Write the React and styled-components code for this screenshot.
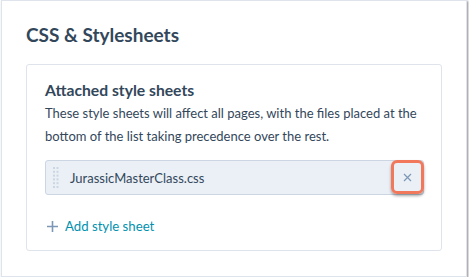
import React from "react";
import styled, { createGlobalStyle } from "styled-components";

const Global = createGlobalStyle`
  html, body { margin: 0; padding: 0; background: #ffffff; }
  body { font-family: Lato, "Open Sans", sans-serif; color: #33475b; }
`;

const Card = styled.section`
  box-sizing: border-box;
  margin-left: 1px;
  width: 466px;
  height: 277px;
  border: 1px solid #dfe3eb;
  box-shadow: 1px 1px 2px rgba(0, 0, 0, 0.45);
  background: #fff;
  padding: 21px 24px 0 24px;
`;

const Title = styled.h2`
  margin: 0 0 17px 0;
  font-size: 19px;
  line-height: 25px;
  font-weight: 700;
  color: #33475b;
`;

const Panel = styled.div`
  box-sizing: border-box;
  width: 416px;
  height: 187px;
  border: 1px solid #dfe3eb;
  border-radius: 3px;
  padding: 15px 17px 0 18px;
`;

const Heading = styled.h3`
  margin: 0;
  font-size: 15.7px;
  line-height: 20px;
  font-weight: 700;
  color: #33475b;
`;

const Desc = styled.p`
  margin: 2px 0 12px 0;
  font-size: 13px;
  line-height: 23px;
  color: #33475b;
`;

const Row = styled.div`
  position: relative;
  box-sizing: border-box;
  height: 35px;
  display: flex;
  align-items: center;
  background: #eaf0f6;
  border: 1px solid #cbd6e2;
  border-radius: 3px;
  padding-left: 7px;
`;

const Handle = styled.svg`
  flex: none;
  margin-right: 11px;
`;

const FileName = styled.span`
  font-size: 13px;
  color: #33475b;
  flex: 1;
`;

const RemoveButton = styled.button`
  position: absolute;
  right: -1px;
  top: -1px;
  box-sizing: border-box;
  width: 33px;
  height: 34px;
  border: 3px solid #f2785c;
  border-radius: 6px;
  background: transparent;
  box-shadow: 0 2px 3px rgba(0, 0, 0, 0.35);
  display: flex;
  align-items: center;
  justify-content: center;
  padding: 0;
  color: #7c98b6;
`;

const AddLink = styled.div`
  display: flex;
  align-items: center;
  gap: 7px;
  margin-top: 22px;
  margin-left: 2px;
  font-size: 13.2px;
  line-height: 18px;
  color: #0091ae;
`;

const dots = [0, 1, 2, 3, 4, 5].flatMap((r) =>
  [0, 1].map((c) => (
    <rect key={`${r}-${c}`} x={c * 3.5} y={r * 3.8} width="2" height="2" fill="#cbd6e2" />
  ))
);

export default function App() {
  return (
    <>
      <Global />
      <Card>
        <Title>CSS &amp; Stylesheets</Title>
        <Panel>
          <Heading>Attached style sheets</Heading>
          <Desc>
            These style sheets will affect all pages, with the files placed at the
            bottom of the list taking precedence over the rest.
          </Desc>
          <Row>
            <Handle width="6" height="21" viewBox="0 0 6 21">
              {dots}
            </Handle>
            <FileName>JurassicMasterClass.css</FileName>
            <RemoveButton aria-label="Remove">
              <svg width="9" height="9" viewBox="0 0 9 9">
                <path d="M1 1 L8 8 M8 1 L1 8" stroke="#7c98b6" strokeWidth="1.2" />
              </svg>
            </RemoveButton>
          </Row>
          <AddLink>
            <svg width="11" height="11" viewBox="0 0 11 11">
              <path d="M5.5 0 V11 M0 5.5 H11" stroke="#7c98b6" strokeWidth="1.6" />
            </svg>
            Add style sheet
          </AddLink>
        </Panel>
      </Card>
    </>
  );
}
